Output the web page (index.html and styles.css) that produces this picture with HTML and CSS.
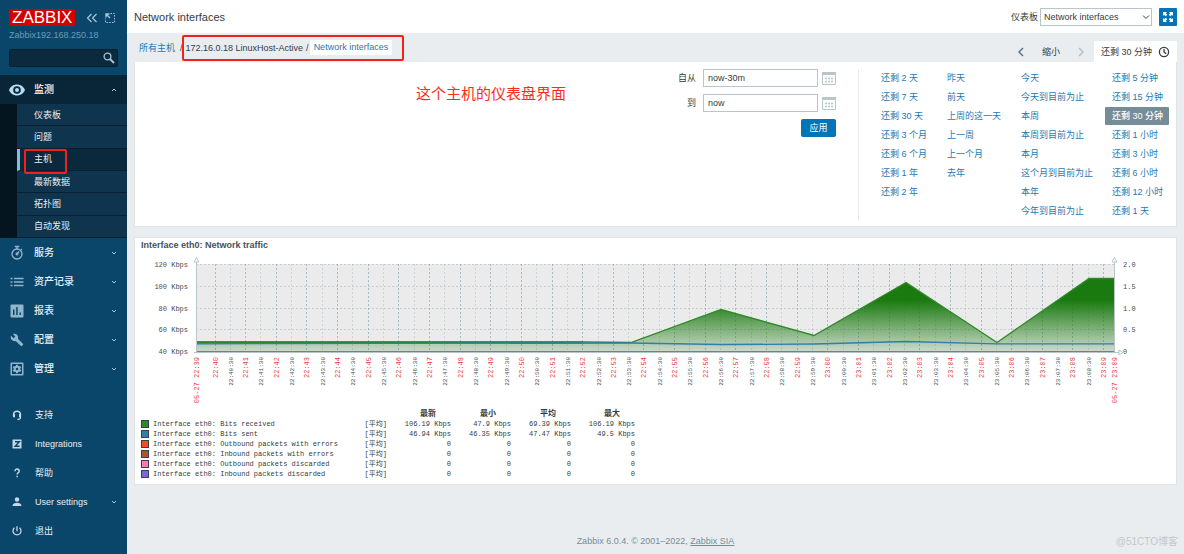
FILE: index.html
```html
<!DOCTYPE html>
<html lang="zh-CN">
<head>
<meta charset="utf-8">
<title>Network interfaces</title>
<link rel="stylesheet" href="styles.css">
</head>
<body>
<aside class="sidebar">
  <div class="brand">
    <a class="logo" href="#">ZABBIX</a>
    <button class="icon-btn" type="button" aria-label="折叠"><svg width="12" height="10" viewBox="0 0 12 10" fill="none" stroke="currentColor" stroke-width="1.2"><path d="M5.5 1 1.500 5l4 4M10.500 1 6.500 5l4 4"/></svg></button>
    <button class="icon-btn" type="button" aria-label="隐藏"><svg width="10" height="10" viewBox="0 0 10 10" fill="none" stroke="currentColor"><path d="M1 4.500V1h3.500M1 1l4 4" stroke-width="1.400"/><path d="M5.500 .5h4v9h-9v-4" stroke-dasharray="1.500 1.300"/></svg></button>
  </div>
  <div class="server">Zabbix192.168.250.18</div>
  <form class="search">
    <input type="text" aria-label="搜索">
    <button class="icon-btn" type="button" aria-label="搜索"><svg width="12" height="12" viewBox="0 0 12 12" fill="none" stroke="currentColor"><circle cx="4.500" cy="4.500" r="3.400" stroke-width="1.300"/><path d="m7 7 4 4" stroke-width="1.800"/></svg></button>
  </form>
  <nav class="menu">
    <a class="item open" href="#"><svg class="ico" viewBox="0 0 16 16"><path fill="currentColor" fill-rule="evenodd" d="M0 8c1.300-3.300 4.300-5.500 8-5.500S14.700 4.700 16 8c-1.300 3.300-4.300 5.500-8 5.500S1.300 11.300 0 8zm8-3.800a3.800 3.800 0 1 0 0 7.600 3.800 3.800 0 0 0 0-7.600zM8 6a2 2 0 1 1 0 4 2 2 0 0 1 0-4z"/></svg><span>监测</span><svg class="chev" viewBox="0 0 6 6"><path d="m1 4 2-2 2 2"/></svg></a>
    <div class="submenu">
      <a href="#">仪表板</a>
      <a href="#">问题</a>
      <a class="current" href="#">主机</a>
      <a href="#">最新数据</a>
      <a href="#">拓扑图</a>
      <a href="#">自动发现</a>
    </div>
    <a class="item" href="#"><svg class="ico" viewBox="0 0 16 16" fill="none" stroke="currentColor" stroke-width="1.300"><circle cx="8" cy="9" r="5"/><path d="M5.800 1.500h4.400M8 1.500v2.500M12 4l1 1M8 9l2-2.500" /><circle cx="8" cy="9" r=".8"/></svg><span>服务</span><svg class="chev" viewBox="0 0 6 6"><path d="m1 2 2 2 2-2"/></svg></a>
    <a class="item" href="#"><svg class="ico" viewBox="0 0 16 16" fill="none" stroke="currentColor" stroke-width="1.500"><path d="M1.500 4.500h2M1.500 8h2M1.500 11.500h2M5 4.500h9.500M5 8h9.500M5 11.500h9.500"/></svg><span>资产记录</span><svg class="chev" viewBox="0 0 6 6"><path d="m1 2 2 2 2-2"/></svg></a>
    <a class="item" href="#"><svg class="ico" viewBox="0 0 16 16"><path fill="currentColor" fill-rule="evenodd" d="M2.500 1.500h11a1 1 0 0 1 1 1v11a1 1 0 0 1-1 1h-11a1 1 0 0 1-1-1v-11a1 1 0 0 1 1-1zM4 6.500V12h1.500V6.500zM7.200 4v8h1.500V4zM10.500 9.500V12H12V9.500z"/></svg><span>报表</span><svg class="chev" viewBox="0 0 6 6"><path d="m1 2 2 2 2-2"/></svg></a>
    <a class="item" href="#"><svg class="ico" viewBox="-2 -2 28 28"><path fill="currentColor" d="m22.700 19-9.100-9.100c.9-2.300.4-5-1.500-6.900-2-2-5-2.400-7.400-1.300L9 6 6 9 1.600 4.700C.4 7.100.9 10.100 2.900 12.100c1.900 1.900 4.600 2.400 6.900 1.500l9.100 9.100c.4.4 1 .4 1.400 0l2.300-2.300c.5-.4.5-1.100.1-1.400z"/></svg><span>配置</span><svg class="chev" viewBox="0 0 6 6"><path d="m1 2 2 2 2-2"/></svg></a>
    <a class="item" href="#"><svg class="ico" viewBox="0 0 16 16"><path fill="currentColor" fill-rule="evenodd" d="M2.500 1.500h11a1 1 0 0 1 1 1v11a1 1 0 0 1-1 1h-11a1 1 0 0 1-1-1v-11a1 1 0 0 1 1-1zM3 3v10h10V3z"/><g fill="none" stroke="currentColor" stroke-width="2"><circle cx="8" cy="8" r="2.300"/><path d="M8 3.800v2M8 10.200v2M4.300 5.900l1.500.9M10.200 9.200l1.500.9M4.300 10.100l1.500-.9M10.200 6.800l1.500-.9"/></g></svg><span>管理</span><svg class="chev" viewBox="0 0 6 6"><path d="m1 2 2 2 2-2"/></svg></a>
  </nav>
  <nav class="menu user-menu">
    <a class="item" href="#"><svg class="ico" viewBox="0 0 16 16" fill="none" stroke="currentColor"><path stroke-width="1.300" d="M4.500 9V7a3.600 3.600 0 0 1 7 0v3c0 1.800-1 2.500-3 2.500"/><path stroke-width="2" d="M5 7v3.300M11 7v3.300"/></svg><span>支持</span></a>
    <a class="item" href="#"><svg class="ico" viewBox="0 0 16 16"><rect x="3.500" y="3.500" width="9" height="9" fill="currentColor"/><path d="M6 5.800h4.300L6.200 10.300h4.400" fill="none" stroke="#0a466a" stroke-width="1.400"/></svg><span>Integrations</span></a>
    <a class="item" href="#"><svg class="ico" viewBox="0 0 16 16" fill="none" stroke="currentColor" stroke-width="1.400"><path d="M6 6.200c0-3 4.200-2.800 4.200 0 0 1.600-2.100 1.700-2.100 3.300M8.100 10.800v1.500"/></svg><span>帮助</span></a>
    <a class="item" href="#"><svg class="ico" viewBox="0 0 16 16" fill="currentColor"><circle cx="8" cy="5.500" r="2.200"/><path d="M3.500 12c0-4.200 9-4.200 9 0z"/></svg><span>User settings</span><svg class="chev" viewBox="0 0 6 6"><path d="m1 2 2 2 2-2"/></svg></a>
    <a class="item" href="#"><svg class="ico" viewBox="0 0 16 16" fill="none" stroke="currentColor" stroke-width="1.300"><path d="M8 3.200v5M5.500 4.800a4 4 0 1 0 5 0"/></svg><span>退出</span></a>
  </nav>
</aside>

<main class="main">
  <header class="page-head">
    <h1>Network interfaces</h1>
    <div class="head-tools">
      <label for="board">仪表板</label>
      <span class="select"><select id="board"><option>Network interfaces</option></select><svg viewBox="0 0 8 6"><path d="m1 1.500 3 3 3-3"/></svg></span>
      <button class="kiosk" type="button" aria-label="全屏"><svg width="12" height="12" viewBox="0 0 12 12" fill="currentColor"><path d="M1 1h4L3.800 2.200l1.500 1.500-1.600 1.600-1.500-1.500L1 5zM11 1v4L9.800 3.800 8.300 5.300 6.700 3.700l1.500-1.500L7 1zM1 11V7l1.200 1.200 1.500-1.500 1.600 1.600-1.500 1.500L5 11zM11 11H7l1.200-1.200-1.500-1.500 1.600-1.600 1.500 1.500L11 7z"/></svg></button>
    </div>
  </header>

  <div class="content">
    <div class="bar">
      <nav class="crumbs">
        <a href="#">所有主机</a><span class="sep">/</span>
        <span class="marked"><span>172.16.0.18 LinuxHost-Active</span><span class="sep">/</span><a class="chip" href="#">Network interfaces</a></span>
      </nav>
      <div class="timenav">
        <button class="arrow" type="button" aria-label="后退"><svg width="6" height="10" viewBox="0 0 6 10"><path d="M5 1 1 5l4 4"/></svg></button>
        <button class="zoomout" type="button">缩小</button>
        <button class="arrow off" type="button" aria-label="前进"><svg width="6" height="10" viewBox="0 0 6 10"><path d="m1 1 4 4-4 4"/></svg></button>
        <button class="tab" type="button">还剩 30 分钟<svg width="12" height="12" viewBox="0 0 12 12" fill="none" stroke="currentColor" stroke-width="1.300"><circle cx="6" cy="6" r="4.600"/><path d="M6 3v3l2.200 1.800"/></svg></button>
      </div>
    </div>

    <section class="filter">
      <p class="note">这个主机的仪表盘界面</p>
      <form class="range">
        <label for="from">自从</label><input id="from" type="text" value="now-30m">
        <button class="cal" type="button" aria-label="日历"><svg width="14" height="14" viewBox="0 0 14 14"><path d="M.5 1v12.500h13V1" fill="none" stroke="currentColor"/><path d="M0 1h14v3H0z" fill="currentColor"/><path d="M3 7.500h8M3 10.500h8" stroke="currentColor" stroke-width="1.500" stroke-dasharray="2 1"/></svg></button>
        <label for="to">到</label><input id="to" type="text" value="now">
        <button class="cal" type="button" aria-label="日历"><svg width="14" height="14" viewBox="0 0 14 14"><path d="M.5 1v12.500h13V1" fill="none" stroke="currentColor"/><path d="M0 1h14v3H0z" fill="currentColor"/><path d="M3 7.500h8M3 10.500h8" stroke="currentColor" stroke-width="1.500" stroke-dasharray="2 1"/></svg></button>
        <button class="apply" type="button">应用</button>
      </form>
      <div class="presets">
        <div class="col c1"><a href="#">还剩 2 天</a><a href="#">还剩 7 天</a><a href="#">还剩 30 天</a><a href="#">还剩 3 个月</a><a href="#">还剩 6 个月</a><a href="#">还剩 1 年</a><a href="#">还剩 2 年</a></div>
        <div class="col c2"><a href="#">昨天</a><a href="#">前天</a><a href="#">上周的这一天</a><a href="#">上一周</a><a href="#">上一个月</a><a href="#">去年</a></div>
        <div class="col c3"><a href="#">今天</a><a href="#">今天到目前为止</a><a href="#">本周</a><a href="#">本周到目前为止</a><a href="#">本月</a><a href="#">这个月到目前为止</a><a href="#">本年</a><a href="#">今年到目前为止</a></div>
        <div class="col c4"><a href="#">还剩 5 分钟</a><a href="#">还剩 15 分钟</a><a class="sel" href="#">还剩 30 分钟</a><a href="#">还剩 1 小时</a><a href="#">还剩 3 小时</a><a href="#">还剩 6 小时</a><a href="#">还剩 12 小时</a><a href="#">还剩 1 天</a></div>
      </div>
    </section>

    <section class="widget">
      <h2>Interface eth0: Network traffic</h2>
      <svg class="chart" viewBox="0 0 1041 152" role="img" aria-label="Network traffic">
        <defs>
          <linearGradient id="area" gradientUnits="userSpaceOnUse" x1="0" y1="24" x2="0" y2="98">
            <stop offset="0" stop-color="#1a7a10"/>
            <stop offset=".3" stop-color="#1a7a10"/>
            <stop offset="1" stop-color="#1a7a10" stop-opacity=".14"/>
          </linearGradient>
        </defs>
        <rect x="61" y="10" width="918" height="88" fill="#ebebeb"/>
        <g id="grid"></g>
        <path fill="url(#area)" d="M61 88.500H496L586 55.500 679 81.500 771 28.500 862 88.500 954 24.500H979V98H61z"/>
        <path fill="none" stroke="#2f8a28" stroke-width="1.300" d="M61 88H448L496 88.500 586 55.500 679 81.500 771 28.500 862 88.500 954 24.500H979"/>
        <path stroke="#2d842b" stroke-width="2" d="M61 88.500H448"/>
        <path fill="none" stroke="#347da8" stroke-width="1.300" d="M61 89.800 496 89 586 90.500 679 90 771 87.500 862 89.800H979"/>
        <path stroke="#7d6bd6" d="M61 97.500H979"/>
        <path stroke="#b8c6cc" fill="none" d="M61.500 8V98.500M979.500 8V98.500M59 98.500H984"/>
        <path stroke="#b8c6cc" fill="#fff" d="M59 8h5l-2.500-4.500zM977 8h5l-2.500-4.500zM984 96v5l4-2.500z"/>
        <g id="labels" class="axis"></g>
      </svg>
      <table class="legend">
        <thead><tr><th></th><th></th><th>最新</th><th>最小</th><th>平均</th><th>最大</th></tr></thead>
        <tbody>
          <tr><td><i class="sw s1"></i>Interface eth0: Bits received</td><td>[平均]</td><td>106.19 Kbps</td><td>47.9 Kbps</td><td>69.39 Kbps</td><td>106.19 Kbps</td></tr>
          <tr><td><i class="sw s2"></i>Interface eth0: Bits sent</td><td>[平均]</td><td>46.94 Kbps</td><td>46.35 Kbps</td><td>47.47 Kbps</td><td>49.5 Kbps</td></tr>
          <tr><td><i class="sw s3"></i>Interface eth0: Outbound packets with errors</td><td>[平均]</td><td>0</td><td>0</td><td>0</td><td>0</td></tr>
          <tr><td><i class="sw s4"></i>Interface eth0: Inbound packets with errors</td><td>[平均]</td><td>0</td><td>0</td><td>0</td><td>0</td></tr>
          <tr><td><i class="sw s5"></i>Interface eth0: Outbound packets discarded</td><td>[平均]</td><td>0</td><td>0</td><td>0</td><td>0</td></tr>
          <tr><td><i class="sw s6"></i>Interface eth0: Inbound packets discarded</td><td>[平均]</td><td>0</td><td>0</td><td>0</td><td>0</td></tr>
        </tbody>
      </table>
    </section>
  </div>
  <footer class="foot">Zabbix 6.0.4. © 2001–2022, <a href="#">Zabbix SIA</a></footer>
  <div class="watermark">@51CTO博客</div>
</main>
<script src="chart.js"></script>
</body>
</html>
```
FILE: styles.css
```css
* { box-sizing: border-box; }
body {
  margin: 0;
  min-height: 100vh;
  display: grid;
  grid-template-columns: 127px 1fr;
  background: #e9edf0;
  color: #333c42;
  font: 9px/18px "Liberation Sans", "Noto Sans CJK SC", sans-serif;
}
a { color: #1f78b4; text-decoration: none; }
button, input, select { font: inherit; color: inherit; margin: 0; }
button { border: 0; background: none; padding: 0; cursor: pointer; }
svg { display: block; flex: none; }

.sidebar {
  background: #0a466a;
  color: #fff;
  display: flex;
  flex-direction: column;
  padding: 9px 0;
}
.brand { display: flex; align-items: center; gap: 7px; padding-left: 9px; }
.logo {
  background: #d40000;
  color: #fff;
  font-size: 17px;
  line-height: 17px;
  padding: 0 3px;
  margin-right: 4px;
}
.icon-btn { color: #a9c6d8; display: flex; }
.server { padding-left: 9px; color: #6c9ab7; }
.search {
  display: flex;
  align-items: center;
  margin: 5px 9px 8px;
  height: 18px;
  padding-right: 2px;
  background: #0b2a3d;
  border: 1px solid #08202f;
  border-radius: 2px;
}
.search input { flex: 1; min-width: 0; border: 0; background: none; outline: 0; }

.item {
  display: flex;
  align-items: center;
  height: 29px;
  padding: 0 10px 0 9px;
  color: #e6eff4;
  font-size: 10px;
  font-weight: 500;
}
.item span { flex: 1; margin-left: 9px; }
.ico { width: 16px; height: 16px; color: #90b6cd; }
.item.open { background: #092538; color: #fff; }
.item.open .ico { color: #b5dbf2; }
.chev { width: 6px; height: 6px; fill: none; stroke: #a9c6d8; }
.user-menu { margin-top: auto; }
.user-menu .item { font-size: 9px; font-weight: 400; }
.user-menu .item span { margin-left: 10px; }
.user-menu .ico { color: #c3d8e4; }
.submenu {
  display: grid;
  grid-auto-rows: 1fr;
  min-height: 134px;
  padding-left: 17px;
  background: #04151f;
}
.submenu a {
  display: flex;
  align-items: center;
  padding-left: 17px;
  background: #0f344d;
  border-bottom: 1px solid #08202f;
  color: #e6eff4;
}
.submenu .current {
  position: relative;
  z-index: 1;
  background: #0a293d;
  border-left: 3px solid #7fc0e8;
  padding-left: 14px;
}
.submenu .current::after {
  content: "";
  position: absolute;
  left: 4px;
  top: 0;
  width: 39px;
  height: 21px;
  border: 2px solid #f5201a;
  border-radius: 2px;
}

.main { position: relative; display: flex; flex-direction: column; min-width: 0; }
.page-head {
  display: flex;
  justify-content: space-between;
  align-items: center;
  height: 33px;
  padding: 0 7px;
  background: #fff;
}
h1 { margin: 0; font-size: 11px; font-weight: 400; }
.head-tools { display: flex; align-items: center; }
.select { position: relative; margin: 0 7px 0 2px; }
.select select {
  display: block;
  width: 112px;
  height: 18px;
  padding: 0 3px;
  border: 1px solid #b8c6cc;
  background: #fff;
  line-height: 16px;
  appearance: none;
}
.select svg { position: absolute; right: 2px; top: 6px; width: 8px; height: 6px; fill: none; stroke: #333c42; pointer-events: none; }
.kiosk { width: 18px; height: 18px; display: grid; place-items: center; background: #0275b8; color: #fff; border-radius: 1px; }

.content { padding: 0 7px; }
.bar { display: flex; justify-content: space-between; align-items: flex-end; height: 29px; }
.crumbs { display: flex; align-items: center; height: 29px; padding-left: 5px; }
.sep { padding: 0 3px 0 5px; }
.marked { position: relative; display: flex; align-items: center; }
.marked .sep { padding: 0 1px; }
.marked .sep { padding-left: 3px; }
.marked::after {
  content: "";
  position: absolute;
  left: -4px;
  right: -12px;
  top: -4px;
  bottom: -4px;
  border: 2px solid #f5201a;
  border-radius: 2px;
}
.chip { background: #fff; padding: 0 4px; line-height: 15px; }
.timenav { display: flex; align-items: center; }
.arrow { padding: 0 4px; }
.arrow svg { fill: none; stroke: #5c7380; stroke-width: 1.5; }
.arrow.off svg { stroke: #b3bfc6; }
.zoomout { margin: 0 14px; }
.tab { display: flex; align-items: center; gap: 6px; height: 21px; margin-left: 6px; padding: 0 7px; background: #fff; }

.filter {
  position: relative;
  display: flex;
  justify-content: flex-end;
  padding: 7px 7px 6px;
  background: #fff;
  border: 1px solid #dfe4e7;
  border-top: 0;
}
.note { position: absolute; left: 281px; top: 23px; margin: 0; font-size: 15px; color: #fb2c1c; }
.range {
  display: grid;
  grid-template-columns: auto 115px 14px;
  grid-auto-rows: 18px;
  gap: 7px 4px;
  align-content: start;
  margin-right: 22px;
}
.range label { text-align: right; margin-right: 3px; }
.range input { min-width: 0; padding: 0 4px; border: 1px solid #b8c6cc; background: #fff; }
.cal { color: #b8c6cc; display: grid; place-items: center; }
.apply {
  grid-column: 2 / 4;
  justify-self: end;
  width: 35px;
  background: #0275b8;
  color: #fff;
  border-radius: 2px;
}
.presets { display: flex; border-left: 1px solid #e6eaec; padding-left: 15px; }
.col { display: flex; flex-direction: column; gap: 1px; }
.col a { padding-left: 7px; height: 18px; }
.c1 { width: 66px; }
.c2 { width: 74px; }
.c3 { width: 91px; }
.c4 { width: 64px; }
.col .sel { background: #768d99; color: #fff; font-weight: 500; border-radius: 1px; }

.widget { margin-top: 10px; background: #fff; border: 1px solid #dfe4e7; padding-bottom: 5px; }
h2 { margin: 0; padding: 0 0 1px 6px; font-size: 9px; line-height: 15px; color: #44525b; }
.chart { width: 100%; height: auto; }
.axis { font: 7px "Liberation Mono", monospace; fill: #444f56; }
.axis .minute { fill: #e8393b; }
.axis .half { font-size: 6px; }
.legend {
  border-collapse: collapse;
  margin: 3px 0 0 6px;
  font: 7px/10px "Liberation Mono", "Noto Sans CJK SC", monospace;
}
.legend td, .legend th { padding: 0; height: 10px; text-align: right; white-space: nowrap; }
.legend th { font-size: 8px; padding-right: 15px; }
.legend td:first-child { width: 222px; text-align: left; }
.legend td:nth-child(2) { width: 24px; }
.legend td:nth-child(3) { width: 64px; }
.legend td:nth-child(4), .legend td:nth-child(5) { width: 60px; }
.legend td:nth-child(6) { width: 64px; }
.sw { display: inline-block; width: 8px; height: 8px; margin-right: 4px; border: 1px solid #33424c; vertical-align: middle; }
.s1 { background: #2f8a28; }
.s2 { background: #347da8; }
.s3 { background: #f74c1e; }
.s4 { background: #a65a2a; }
.s5 { background: #ff79ac; }
.s6 { background: #7d66e0; }

.foot { margin-top: auto; padding-bottom: 4px; text-align: center; color: #768d99; }
.foot a { color: inherit; text-decoration: underline; }
.watermark { position: absolute; right: 6px; bottom: 3px; font-size: 10px; color: #c3c8cb; }
```
FILE: chart.js
```js
const NS = "http://www.w3.org/2000/svg";
const grid = document.getElementById("grid");
const labels = document.getElementById("labels");

function line(x1, y1, x2, y2, opacity) {
  const el = document.createElementNS(NS, "line");
  const attrs = { x1, y1, x2, y2, stroke: "#8fa5b0", "stroke-dasharray": "2 2", "stroke-opacity": opacity };
  for (const key in attrs) el.setAttribute(key, attrs[key]);
  grid.append(el);
}

function label(text, x, y, anchor, cls, rotated) {
  const el = document.createElementNS(NS, "text");
  el.textContent = text;
  el.setAttribute("text-anchor", anchor);
  if (cls) el.setAttribute("class", cls);
  if (rotated) el.setAttribute("transform", `translate(${x} ${y}) rotate(-90)`);
  else { el.setAttribute("x", x); el.setAttribute("y", y); }
  labels.append(el);
}

const left = ["120 Kbps", "100 Kbps", "80 Kbps", "60 Kbps", "40 Kbps"];
const right = ["2.0", "1.5", "1.0", "0.5", "0"];
left.forEach((text, i) => {
  const y = 10.5 + Math.round(i * 21.8);
  if (i < 4) line(61, y, 979, y, 0.4);
  label(text, 53, y + 2, "end");
  label(right[i], 988, y + 2, "start");
});

const pad = (n) => String(n).padStart(2, "0");
for (let i = 0; i <= 58; i++) {
  const x = Math.round(79.5 + i * 15.32) + 0.5;
  const minutes = 22 * 60 + 40 + Math.floor(i / 2);
  const half = i % 2 === 1;
  const time = `${pad(Math.floor(minutes / 60))}:${pad(minutes % 60)}${half ? ":30" : ""}`;
  line(x, 10, x, 98, half ? 0.35 : 0.7);
  label(time, x + 2, 103, "end", half ? "half" : "minute", true);
}
label("05-27 22:39", 64, 103, "end", "minute", true);
label("05-27 23:09", 982, 103, "end", "minute", true);
```
